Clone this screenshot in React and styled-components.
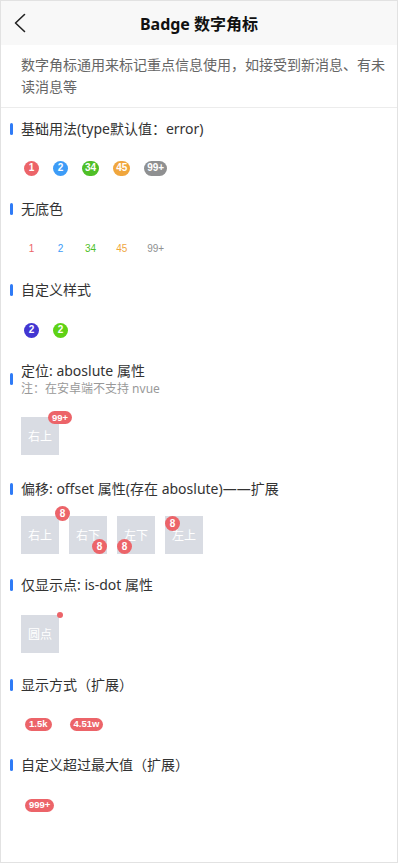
import styled, { createGlobalStyle } from "styled-components";

const GlobalStyle = createGlobalStyle`
  body {
    margin: 0;
    background: #ffffff;
    font-family: "Noto Sans", "Noto Sans CJK SC", sans-serif;
  }
`;

const colors = {
  error: "#ec6469",
  primary: "#3d9cf7",
  success: "#4fbf27",
  warning: "#f0a63d",
  info: "#8f9091",
};

const Page = styled.div`
  width: 398px;
  height: 863px;
  box-sizing: border-box;
  border: 1px solid #e2e2e2;
  overflow: hidden;
  background: #ffffff;
`;

const NavBar = styled.div`
  display: grid;
  grid-template-columns: 44px 1fr 44px;
  align-items: center;
  height: 44px;
  background: #f8f8f8;
`;

const Back = styled.div`
  display: flex;
  align-items: center;
  padding-left: 13px;
  height: 100%;
`;

const NavTitle = styled.div`
  text-align: center;
  font-size: 16px;
  font-weight: bold;
  color: #111111;
`;

const Intro = styled.div`
  padding: 9px 12px 9px 20px;
  font-size: 14px;
  line-height: 22px;
  color: #666666;
  border-bottom: 1px solid #ececec;
`;

const Section = styled.div`
  margin-top: ${({ $top }) => $top}px;
`;

const Title = styled.div`
  display: flex;
  align-items: center;
  padding-left: 9px;
`;

const Bar = styled.span`
  width: 3px;
  height: 12px;
  border-radius: 2px;
  background: #2f7bf6;
  margin-right: 8px;
`;

const TitleText = styled.div`
  display: flex;
  flex-direction: column;
`;

const Heading = styled.span`
  font-size: 14px;
  line-height: 20px;
  color: #333333;
`;

const Note = styled.span`
  font-size: 12px;
  line-height: 16px;
  color: #999999;
`;

const Body = styled.div`
  display: flex;
  align-items: center;
  gap: ${({ $gap }) => $gap ?? 14}px;
  margin-top: ${({ $top }) => $top}px;
  padding-left: ${({ $left }) => $left ?? 23}px;
  min-height: 16px;
`;

const Badge = styled.span`
  display: inline-flex;
  align-items: center;
  justify-content: center;
  box-sizing: border-box;
  height: ${({ $small }) => ($small ? 13 : 15)}px;
  min-width: ${({ $small }) => ($small ? 13 : 15)}px;
  padding: 0 ${({ $small }) => ($small ? 4 : 3)}px;
  border-radius: 100px;
  font-family: "Liberation Sans", Arial, sans-serif;
  font-size: ${({ $small }) => ($small ? 9.5 : 10)}px;
  font-weight: ${({ $plain }) => ($plain ? "normal" : "bold")};
  line-height: 1;
  color: ${({ $plain, $color }) => ($plain ? $color : "#ffffff")};
  background: ${({ $plain, $color }) => ($plain ? "transparent" : $color)};
`;

const Pinned = styled(Badge)`
  position: absolute;
  top: ${({ $t }) => ($t === undefined ? "auto" : `${$t}px`)};
  right: ${({ $r }) => ($r === undefined ? "auto" : `${$r}px`)};
  bottom: ${({ $b }) => ($b === undefined ? "auto" : `${$b}px`)};
  left: ${({ $l }) => ($l === undefined ? "auto" : `${$l}px`)};
`;

const Dot = styled.span`
  position: absolute;
  top: -3px;
  right: -4px;
  width: 6px;
  height: 6px;
  border-radius: 50%;
  background: ${colors.error};
`;

const Box = styled.div`
  position: relative;
  display: flex;
  align-items: center;
  justify-content: center;
  width: 38px;
  height: 38px;
  background: #d9dce3;
  color: #ffffff;
  font-size: 12px;
`;

const list = [
  { text: "1", color: colors.error },
  { text: "2", color: colors.primary },
  { text: "34", color: colors.success },
  { text: "45", color: colors.warning },
  { text: "99+", color: colors.info },
];

function SectionTitle({ children, note }) {
  return (
    <Title>
      <Bar />
      <TitleText>
        <Heading>{children}</Heading>
        {note && <Note>{note}</Note>}
      </TitleText>
    </Title>
  );
}

export default function App() {
  return (
    <Page>
      <GlobalStyle />
      <NavBar>
        <Back>
          <svg width="12" height="20" viewBox="0 0 12 20">
            <polyline
              points="10.5,1.5 1.5,10 10.5,18.5"
              fill="none"
              stroke="#222"
              strokeWidth="1.6"
              strokeLinecap="round"
              strokeLinejoin="round"
            />
          </svg>
        </Back>
        <NavTitle>Badge 数字角标</NavTitle>
        <div />
      </NavBar>
      <Intro>数字角标通用来标记重点信息使用，如接受到新消息、有未读消息等</Intro>

      <Section $top={11}>
        <SectionTitle>基础用法(type默认值：error)</SectionTitle>
        <Body $top={21}>
          {list.map((b) => (
            <Badge key={b.text} $color={b.color}>
              {b.text}
            </Badge>
          ))}
        </Body>
      </Section>

      <Section $top={23}>
        <SectionTitle>无底色</SectionTitle>
        <Body $top={22}>
          {list.map((b) => (
            <Badge key={b.text} $color={b.color} $plain>
              {b.text}
            </Badge>
          ))}
        </Body>
      </Section>

      <Section $top={23}>
        <SectionTitle>自定义样式</SectionTitle>
        <Body $top={22}>
          <Badge $color="#4236d2">2</Badge>
          <Badge $color="#5fd215">2</Badge>
        </Body>
      </Section>

      <Section $top={23}>
        <SectionTitle note="注：在安卓端不支持 nvue">定位: aboslute 属性</SectionTitle>
        <Body $top={20} $left={20}>
          <Box>
            右上
            <Pinned $small $color={colors.error} $t={-6} $r={-13}>
              99+
            </Pinned>
          </Box>
        </Body>
      </Section>

      <Section $top={24}>
        <SectionTitle>偏移: offset 属性(存在 aboslute)——扩展</SectionTitle>
        <Body $top={17} $left={20} $gap={10}>
          <Box>
            右上
            <Pinned $color={colors.error} $t={-10} $r={-11}>
              8
            </Pinned>
          </Box>
          <Box>
            右下
            <Pinned $color={colors.error} $b={0} $r={0}>
              8
            </Pinned>
          </Box>
          <Box>
            左下
            <Pinned $color={colors.error} $b={0} $l={0}>
              8
            </Pinned>
          </Box>
          <Box>
            左上
            <Pinned $color={colors.error} $t={0} $l={0}>
              8
            </Pinned>
          </Box>
        </Body>
      </Section>

      <Section $top={21}>
        <SectionTitle>仅显示点: is-dot 属性</SectionTitle>
        <Body $top={20} $left={20}>
          <Box>
            圆点
            <Dot />
          </Box>
        </Body>
      </Section>

      <Section $top={22}>
        <SectionTitle>显示方式（扩展）</SectionTitle>
        <Body $top={21} $left={24} $gap={18}>
          <Badge $small $color={colors.error}>1.5k</Badge>
          <Badge $small $color={colors.error}>4.51w</Badge>
        </Body>
      </Section>

      <Section $top={23}>
        <SectionTitle>自定义超过最大值（扩展）</SectionTitle>
        <Body $top={22} $left={24}>
          <Badge $small $color={colors.error}>999+</Badge>
        </Body>
      </Section>
    </Page>
  );
}
